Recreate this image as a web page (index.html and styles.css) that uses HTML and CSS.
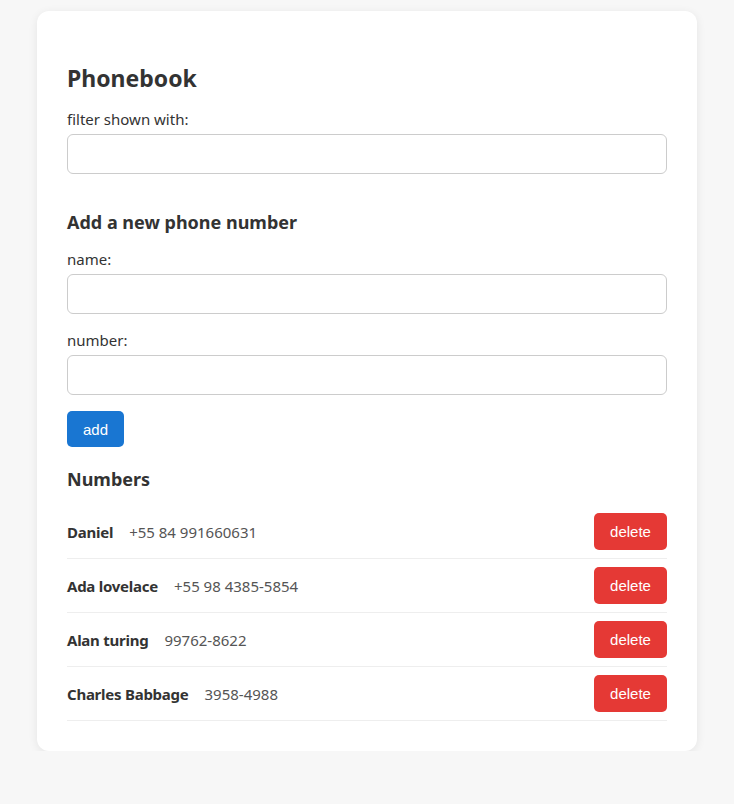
FILE: index.html
```html
<!DOCTYPE html>
<html>
<head>
<meta charset="utf-8">
<link rel="stylesheet" href="styles.css">
</head>
<body>
<div class="card">
  <h1 class="title">Phonebook</h1>
  <div class="field">
    <label class="label">filter shown with:</label>
    <input class="input" type="text">
  </div>
  <h2 class="subtitle add-title">Add a new phone number</h2>
  <form class="form">
    <div class="field">
      <label class="label">name:</label>
      <input class="input" type="text">
    </div>
    <div class="field">
      <label class="label">number:</label>
      <input class="input" type="text">
    </div>
    <div class="actions"><button type="button" class="btn btn-add">add</button></div>
  </form>
  <h2 class="subtitle numbers-title">Numbers</h2>
  <ul class="list">
    <li class="row"><span class="name">Daniel</span><span class="num">+55 84 991660631</span><button class="btn btn-del">delete</button></li>
    <li class="row"><span class="name">Ada lovelace</span><span class="num">+55 98 4385-5854</span><button class="btn btn-del">delete</button></li>
    <li class="row"><span class="name">Alan turing</span><span class="num">99762-8622</span><button class="btn btn-del">delete</button></li>
    <li class="row"><span class="name">Charles Babbage</span><span class="num">3958-4988</span><button class="btn btn-del">delete</button></li>
  </ul>
</div>
</body>
</html>
```
FILE: styles.css
```css
* { box-sizing: border-box; }
body {
  margin: 0;
  background: #f7f7f7;
  font-family: "Noto Sans", "Open Sans", sans-serif;
  color: #333;
  font-size: 15px;
}
.card {
  width: 660px;
  margin: 11px auto 0;
  background: #fff;
  border-radius: 12px;
  box-shadow: 0 2px 10px rgba(0,0,0,0.08);
  padding: 51px 30px 30px;
}
.title {
  margin: 0 0 15px;
  font-size: 23px;
  font-weight: 700;
  line-height: 32px;
}
.field {
  display: flex;
  flex-direction: column;
  gap: 5px;
  margin-bottom: 16px;
}
.label { line-height: 20px; }
.input {
  height: 40px;
  border: 1px solid #ccc;
  border-radius: 6px;
  font-size: 15px;
  padding: 0 10px;
}
.subtitle {
  font-size: 18px;
  font-weight: 700;
  margin: 0;
  line-height: 24px;
}
.add-title { margin-top: 36px; margin-bottom: 15px; }
.actions { display: flex; }
.btn {
  border: none;
  color: #fff;
  font-family: "Liberation Sans", Arial, sans-serif;
  font-size: 15px;
  cursor: pointer;
}
.btn-add {
  background: #1976d2;
  width: 57px;
  height: 36px;
  border-radius: 5px;
}
.numbers-title { margin-top: 20px; margin-bottom: 14px; }
.list { list-style: none; margin: 0; padding: 0; }
.row {
  display: flex;
  align-items: center;
  padding: 8px 0;
  border-bottom: 1px solid #eee;
}
.name { font-weight: 700; letter-spacing: -0.25px; }
.num { margin-left: 16px; color: #555; flex: 1; }
.btn-del {
  background: #e53935;
  width: 73px;
  height: 37px;
  border-radius: 5px;
}
```
